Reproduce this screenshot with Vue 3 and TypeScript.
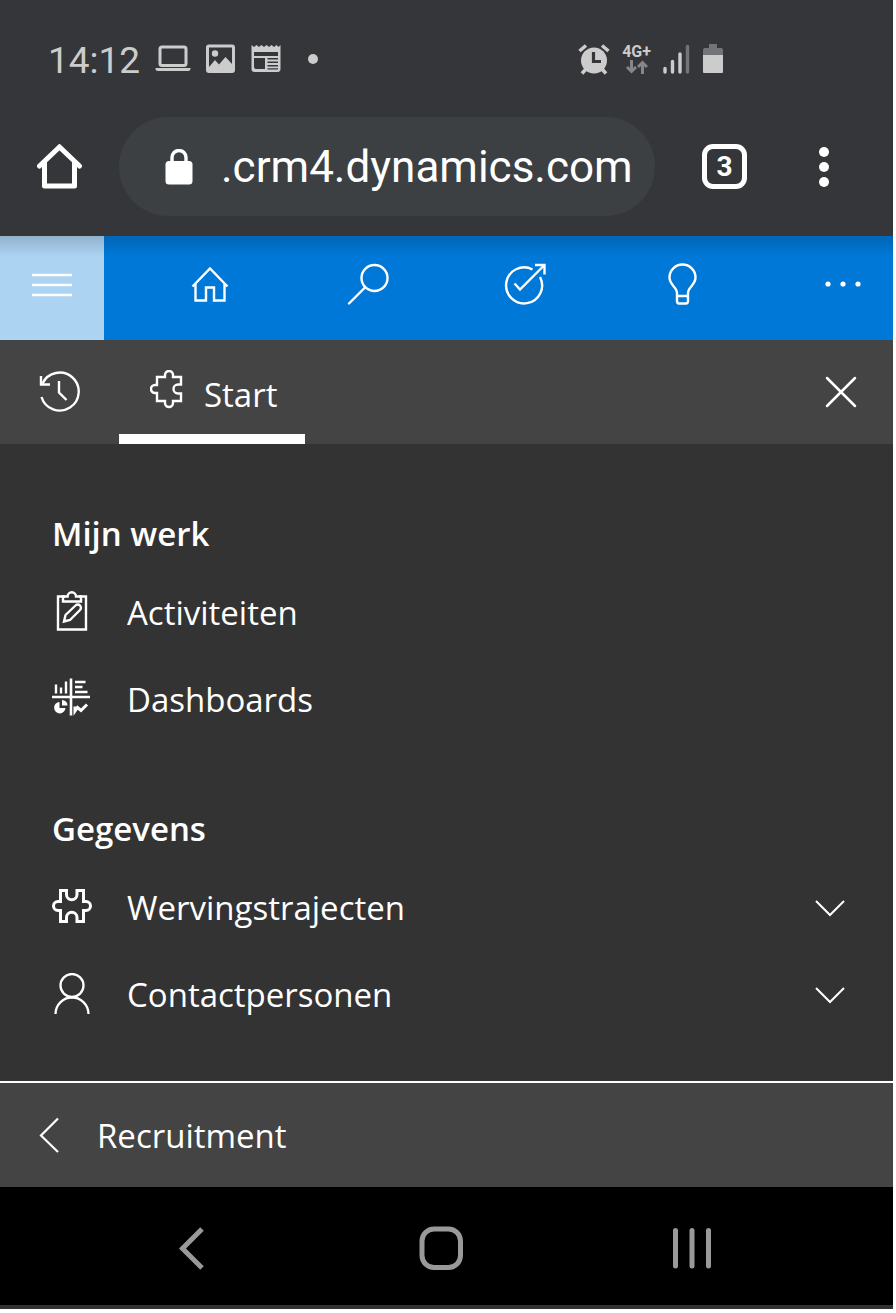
<script setup lang="ts">
import { ref } from 'vue'

interface Entry {
  label: string
  icon: 'clipboard' | 'dashboard' | 'puzzle' | 'person'
  expandable: boolean
}
interface Group {
  title: string
  entries: Entry[]
}

const address = ref('.crm4.dynamics.com')
const openTabs = 3

const groups: Group[] = [
  {
    title: 'Mijn werk',
    entries: [
      { label: 'Activiteiten', icon: 'clipboard', expandable: false },
      { label: 'Dashboards', icon: 'dashboard', expandable: false },
    ],
  },
  {
    title: 'Gegevens',
    entries: [
      { label: 'Wervingstrajecten', icon: 'puzzle', expandable: true },
      { label: 'Contactpersonen', icon: 'person', expandable: true },
    ],
  },
]
</script>

<template>
  <div class="phone">
    <header class="chrome">
      <div class="status">
        <div class="status-left">
          <time class="clock">14:12</time>
          <svg width="36" height="30" viewBox="0 0 36 30" fill="none">
            <rect x="5" y="3" width="26" height="18.500" rx="2" stroke="#ccc" stroke-width="3" />
            <path d="M0.500 24H35.500V25Q35.500 27 33 27H3Q0.500 27 0.500 25Z" fill="#ccc" />
          </svg>
          <svg width="30" height="30" viewBox="0 0 30 30">
            <rect x="0" y="0.500" width="29" height="28.500" rx="3" fill="#ccc" />
            <path d="M3 3.500H26V20L19.500 13L13 20.500L9 16L3 23Z" fill="#35363a" />
            <circle cx="9" cy="9.500" r="3.200" fill="#ccc" />
          </svg>
          <svg width="30" height="30" viewBox="0 0 30 30">
            <path d="M0.500 1L3 3L5.500 1L8 3L10.500 1L13 3L15.500 1L18 3L20.500 1L23 3L25.500 1L27.500 3L29.500 1V25Q29.500 28 26.500 28H3.500Q0.500 28 0.500 25Z" fill="#ccc" />
            <path d="M3 8H27V12H3ZM3 14H14V25H5Q3 25 3 23ZM16.500 14H27V15.500H16.500ZM16.500 17.500H27V19H16.500ZM16.500 21H27V22.500H16.500ZM16.500 24.300H27V25.500H16.500Z" fill="#35363a" />
          </svg>
          <span class="dot"></span>
        </div>
        <div class="status-right">
          <svg width="32" height="32" viewBox="0 0 32 32" fill="none" stroke="#ccc">
            <circle cx="16" cy="17.500" r="13" fill="#ccc" stroke="none" />
            <path d="M1.500 8L8 2.500M24 2.500L30.500 8" stroke-width="3.500" />
            <path d="M8 26L4 30.500M24 26L28 30.500" stroke-width="3.500" />
            <path d="M15.500 9V18.500H23" stroke="#35363a" stroke-width="3.200" />
          </svg>
          <span class="network">
            <span>4G+</span>
            <svg width="22" height="14" viewBox="0 0 22 14" fill="none" stroke="#85868a" stroke-width="3">
              <path d="M5.500 0V11M1 7L5.500 11.500L10 7M16.500 14V3M12 7L16.500 2.500L21 7" />
            </svg>
          </span>
          <svg width="28" height="30" viewBox="0 0 28 30" stroke-linecap="round" stroke-width="3.400">
            <path d="M2 28V24.500M9.500 28V17.500M17 28V10" stroke="#ccc" />
            <path d="M24.500 28V2.500" stroke="#737478" />
          </svg>
          <svg width="20" height="31" viewBox="0 0 20 31">
            <path d="M6 1H14V5H18Q20 5 20 7V14H0V7Q0 5 2 5H6Z" fill="#737478" />
            <path d="M0 12H20V29Q20 30 19 30H1Q0 30 0 29Z" fill="#ccc" />
          </svg>
        </div>
      </div>

      <div class="toolbar">
        <button class="plain" type="button" aria-label="Startpagina">
          <svg width="46" height="46" viewBox="0 0 46 46" fill="none" stroke="#fff" stroke-width="5" stroke-linejoin="round" stroke-linecap="round">
            <path d="M2.500 22L22.500 3L42.500 22" stroke-linejoin="miter" />
            <path d="M7.500 19V42H37.500V19" />
          </svg>
        </button>
        <label class="address">
          <svg width="28" height="36" viewBox="0 0 28 36">
            <rect x="0.500" y="12" width="27" height="23.500" rx="3.500" fill="#fff" />
            <path d="M7 13V8.500a7 7 0 0 1 14 0V13" fill="none" stroke="#fff" stroke-width="3.400" />
          </svg>
          <input v-model="address" type="text" aria-label="Adres" spellcheck="false" />
        </label>
        <button class="plain tabs" type="button" aria-label="Tabbladen">{{ openTabs }}</button>
        <button class="plain more" type="button" aria-label="Menu">
          <svg width="12" height="42" viewBox="0 0 12 42" fill="#fff">
            <circle cx="6" cy="6" r="5" /><circle cx="6" cy="21" r="5" /><circle cx="6" cy="36" r="5" />
          </svg>
        </button>
      </div>
    </header>

    <nav class="appbar" aria-label="Hoofdnavigatie">
      <button class="active" type="button" aria-label="Navigatie">
        <svg width="42" height="42" viewBox="0 0 42 42" stroke="#fff" stroke-width="2.400">
          <path d="M1 12H41M1 22H41M1 32H41" />
        </svg>
      </button>
      <button type="button" aria-label="Start">
        <svg width="42" height="42" viewBox="0 0 42 42" fill="none" stroke="#fff" stroke-width="2.400">
          <path d="M3.500 23.500L21 5.500L38.500 23.500" />
          <path d="M6.500 21V37.500H17V24.500H25V37.500H35.500V21" />
        </svg>
      </button>
      <button type="button" aria-label="Zoeken">
        <svg width="42" height="42" viewBox="0 0 42 42" fill="none" stroke="#fff" stroke-width="2.400" stroke-linecap="round">
          <circle cx="27.500" cy="15" r="13" />
          <path d="M18 24.500L2 40.500" />
        </svg>
      </button>
      <button type="button" aria-label="Taken">
        <svg width="42" height="42" viewBox="0 0 42 42" fill="none" stroke="#fff" stroke-width="2.400">
          <path d="M28.500 6.500A18 18 0 1 0 36 14" />
          <path d="M10.500 20.500L16 26.500L40 2.500M31 2H40.500V11.500" />
        </svg>
      </button>
      <button type="button" aria-label="Tips">
        <svg width="42" height="42" viewBox="0 0 42 42" fill="none" stroke="#fff" stroke-width="2.400">
          <path d="M15 34V30C15 24 7.500 22 7.500 14.500a13 13 0 0 1 26 0C33.500 22 26 24 26 30V38Q26 40.500 24 40.500H17Q15 40.500 15 38ZM15 33H26" />
        </svg>
      </button>
      <button type="button" aria-label="Meer">
        <svg width="42" height="42" viewBox="0 0 42 42" fill="#fff">
          <circle cx="8" cy="21" r="2.600" /><circle cx="23" cy="21" r="2.600" /><circle cx="38" cy="21" r="2.600" />
        </svg>
      </button>
    </nav>

    <div class="tabbar">
      <button class="recent" type="button" aria-label="Recent">
        <svg width="42" height="42" viewBox="0 0 42 42" fill="none" stroke="#fff" stroke-width="2.400">
          <path d="M2.500 26A19 19 0 1 0 3.500 12.500" />
          <path d="M2 5V13.500H11M20 10V21.500L27.500 29" />
        </svg>
      </button>
      <button class="tab" type="button">
        <svg width="33" height="39" viewBox="0 0 33 39" fill="none" stroke="#fff" stroke-width="2.400">
          <path d="M7 7H15V5a4 4 0 0 1 8 0V7H31V14.500H28a4.500 4.500 0 0 0 0 9H31V31H23V33a4 4 0 0 1 -8 0V31H7V23H5a4 4 0 0 1 0 -8H7Z" />
        </svg>
        <span>Start</span>
      </button>
      <button class="close" type="button" aria-label="Sluiten">
        <svg width="32" height="32" viewBox="0 0 32 32" stroke="#fff" stroke-width="2.500" stroke-linecap="round">
          <path d="M2 2L30 30M30 2L2 30" />
        </svg>
      </button>
    </div>

    <main class="menu">
      <section v-for="group in groups" :key="group.title">
        <h2>{{ group.title }}</h2>
        <ul>
          <li v-for="entry in group.entries" :key="entry.label">
            <a href="#">
              <span class="icon">
                <svg v-if="entry.icon === 'clipboard'" width="40" height="42" viewBox="0 1 40 42" fill="none" stroke="#fff" stroke-width="2.400">
                  <path d="M13 6.500H6V39.500H34V6.500H27" />
                  <path d="M11 6.500V11.500H29V6.500H24a4.200 4.200 0 0 0 -8.400 0Z" />
                  <path d="M12 31.500L13.500 25L23.500 15.500a3 3 0 0 1 4.500 4.500L18 30Z" />
                </svg>
                <svg v-else-if="entry.icon === 'dashboard'" width="40" height="42" viewBox="0 2 40 42" fill="none" stroke="#fff" stroke-width="2.400">
                  <path d="M0 21H38M19 2.500V39.500" stroke-width="2.600" />
                  <path d="M4 17.500V8.500M9 17.500V11.500M14 17.500V5.500" />
                  <path d="M23 6H33.500M23 11H30.500M23 16H35.500" />
                  <path d="M7.500 26a5.700 5.700 0 1 0 6 6H7.500Z" fill="#fff" stroke="none" />
                  <path d="M10 24a5.500 5.500 0 0 1 5.500 5.500H10Z" fill="#fff" stroke="none" />
                  <path d="M23 30.500L23 35L25.500 31.500L29 34.500L35 28.500" stroke-width="3" />
                </svg>
                <svg v-else-if="entry.icon === 'puzzle'" width="40" height="42" viewBox="0 -1 40 42" fill="none" stroke="#fff" stroke-width="3">
                  <path d="M8.500 3.500H14.500V7.500a5 5 0 0 0 10.500 0V3.500H31.500V14.500H34a4.500 4.500 0 0 1 0 9H31.500V34.500H25V30.500a5 5 0 0 0 -10.500 0V34.500H8.500V23.500H6a4.500 4.500 0 0 1 0 -9H8.500Z" />
                </svg>
                <svg v-else width="40" height="42" viewBox="0 0 40 42" fill="none" stroke="#fff" stroke-width="2.300">
                  <circle cx="20" cy="12.500" r="11.500" />
                  <path d="M3.500 41a16.500 16.500 0 0 1 33 0" />
                </svg>
              </span>
              <span class="label">{{ entry.label }}</span>
              <svg v-if="entry.expandable" width="30" height="18" viewBox="0 0 30 18" fill="none" stroke="#fff" stroke-width="2">
                <path d="M1 1L15 15L29 1" />
              </svg>
            </a>
          </li>
        </ul>
      </section>
    </main>

    <button class="area" type="button">
      <svg width="22" height="36" viewBox="0 0 22 36" fill="none" stroke="#fff" stroke-width="2.200">
        <path d="M20 1.500L3 18.500L20 35" />
      </svg>
      <span>Recruitment</span>
    </button>

    <nav class="system" aria-label="Systeem">
      <button type="button" aria-label="Terug">
        <svg width="26" height="44" viewBox="0 0 26 44" fill="none" stroke="#999" stroke-width="5">
          <path d="M24 3L4.500 22.500L24 42" />
        </svg>
      </button>
      <button type="button" aria-label="Beginscherm">
        <svg width="44" height="44" viewBox="0 0 44 44" fill="none" stroke="#999" stroke-width="5">
          <rect x="3" y="3" width="38.500" height="38.500" rx="12" />
        </svg>
      </button>
      <button type="button" aria-label="Recente apps">
        <svg width="40" height="44" viewBox="0 0 40 44" stroke="#999" stroke-width="5" stroke-linecap="round">
          <path d="M3.500 4.500V40M20 4.500V40M36.500 4.500V40" />
        </svg>
      </button>
    </nav>
  </div>
</template>

<style>
body {
  margin: 0;
  background: #fff;
}
</style>

<style scoped>
.phone {
  box-sizing: border-box;
  margin-right: 3px;
  background: #333;
  border-bottom: 4px solid #333;
  color: #fff;
  font-family: 'Open Sans', 'Noto Sans', sans-serif;
  font-size: 33px;
}
button {
  display: flex;
  align-items: center;
  justify-content: center;
  margin: 0;
  padding: 0;
  border: 0;
  background: none;
  color: inherit;
  font: inherit;
}
svg {
  display: block;
  flex: none;
}
.chrome {
  background: #35363a;
  font-family: Roboto, sans-serif;
}
.status {
  display: flex;
  align-items: center;
  justify-content: space-between;
  height: 117px;
  padding: 0 170px 0 48px;
  color: #ccc;
}
.status-left,
.status-right {
  display: flex;
  align-items: center;
}
.status-left {
  gap: 15px;
}
.status-right {
  gap: 12px;
}
.clock {
  padding-top: 4px;
  font-size: 37px;
  line-height: 44px;
}
.dot {
  width: 10px;
  height: 10px;
  margin-left: 12px;
  border-radius: 50%;
  background: #ccc;
}
.network {
  display: flex;
  flex-direction: column;
  align-items: center;
  font-size: 16px;
  font-weight: 700;
  line-height: 16px;
}
.toolbar {
  display: flex;
  align-items: center;
  padding: 0 63px 20px 37px;
}
.address {
  display: flex;
  flex: 1;
  align-items: center;
  gap: 28px;
  box-sizing: border-box;
  min-width: 0;
  height: 99px;
  margin: 0 47px 0 36px;
  padding: 0 16px 0 46px;
  border-radius: 50px;
  background: #3c4043;
}
.address input {
  flex: 1;
  min-width: 0;
  height: 64px;
  padding: 0;
  border: 0;
  outline: 0;
  background: none;
  color: #fff;
  font: 44px Roboto, sans-serif;
}
.tabs {
  box-sizing: border-box;
  width: 45px;
  height: 45px;
  border: 5px solid #fff;
  border-radius: 11px;
  font-size: 28px;
  font-weight: 700;
}
.more {
  margin-left: 71px;
}
.appbar {
  display: flex;
  justify-content: space-between;
  height: 104px;
  background: linear-gradient(rgba(0, 0, 0, 0.16), rgba(0, 0, 0, 0) 20px), #0078d7;
}
.appbar button {
  width: 104px;
  padding-bottom: 8px;
}
.appbar .active {
  background: linear-gradient(rgba(0, 0, 0, 0.16), rgba(0, 0, 0, 0) 20px), #acd3f2;
}
.tabbar {
  display: flex;
  height: 104px;
  background: #444;
}
.recent {
  width: 119px;
}
.tab {
  gap: 21px;
  padding: 0 28px 0 31px;
  border-bottom: 10px solid #fff;
}
.tab span {
  padding-top: 14px;
}
.tab svg {
  margin-top: 4px;
}
.close {
  width: 104px;
  margin-left: auto;
}
.menu {
  display: flex;
  flex-direction: column;
  gap: 48px;
  padding: 53px 48px 42px 52px;
}
h2 {
  margin: 0;
  font-size: 33px;
  font-weight: 600;
  line-height: 73px;
}
ul {
  margin: 0;
  padding: 0;
  list-style: none;
}
li a {
  display: flex;
  align-items: center;
  gap: 35px;
  height: 87px;
  color: #fff;
  text-decoration: none;
}
.icon {
  padding-bottom: 4px;
}
.label {
  flex: 1;
  padding-bottom: 2px;
}
.area {
  justify-content: flex-start;
  gap: 37px;
  box-sizing: border-box;
  width: 100%;
  height: 106px;
  padding: 0 38px;
  border-top: 2px solid #fff;
  background: #444;
}
.system {
  display: flex;
  height: 118px;
  padding: 0 76px 0 66px;
  background: #000;
}
.system button {
  flex: 1;
  padding-top: 4px;
}
</style>
